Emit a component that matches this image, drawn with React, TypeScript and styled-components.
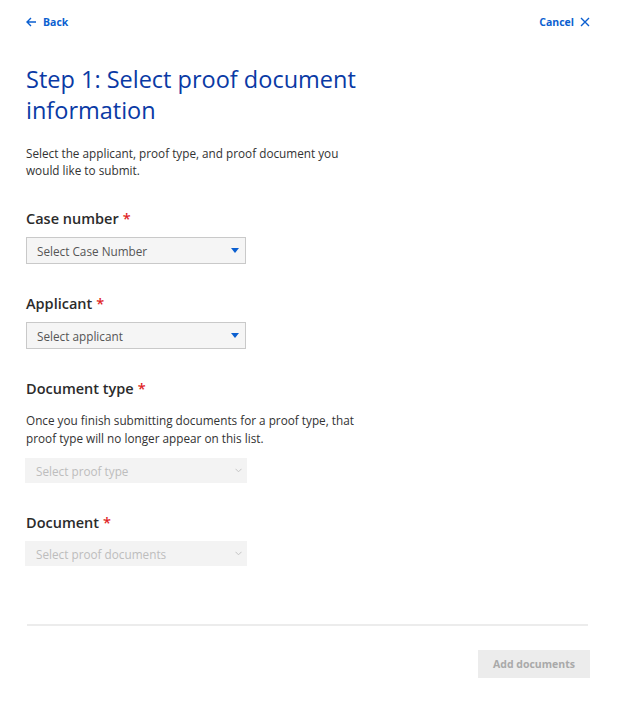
import React from 'react'
import styled, { createGlobalStyle } from 'styled-components'

const GlobalStyle = createGlobalStyle`
  body {
    margin: 0;
    background: #ffffff;
    font-family: 'Open Sans', 'Noto Sans', sans-serif;
    color: #333333;
  }
`

const Page = styled.div`
  padding: 13px 34px 24px 26px;
`

const TopBar = styled.div`
  display: flex;
  justify-content: space-between;
  align-items: center;
  height: 18px;
`

const NavLink = styled.a`
  display: flex;
  align-items: center;
  gap: 6px;
  font-size: 10.5px;
  font-weight: 700;
  color: #0b5fd0;
  text-decoration: none;
  cursor: pointer;
`

const Title = styled.h1`
  margin: 33px 0 0;
  max-width: 350px;
  font-size: 23.5px;
  font-weight: 400;
  line-height: 31px;
  color: #0a3aa5;
`

const Intro = styled.p`
  margin: 19px 0 0;
  max-width: 340px;
  font-size: 11.75px;
  line-height: 17px;
  color: #333333;
`

const Field = styled.div<{ $gap: number }>`
  margin-top: ${(p) => p.$gap}px;
`

const Label = styled.div`
  font-size: 14.5px;
  font-weight: 600;
  color: #2b2b2b;
  line-height: 22px;
`

const Required = styled.span`
  color: #e01f26;
  margin-left: 4px;
`

const Help = styled.p`
  margin: 11px 0 0;
  max-width: 340px;
  font-size: 11.75px;
  line-height: 18px;
  color: #333333;
`

const SelectBox = styled.div<{ $disabled?: boolean; $top: number }>`
  display: flex;
  align-items: center;
  justify-content: space-between;
  box-sizing: border-box;
  margin-top: ${(p) => p.$top}px;
  margin-left: ${(p) => (p.$disabled ? '-1px' : '0')};
  width: ${(p) => (p.$disabled ? '222px' : '220px')};
  height: ${(p) => (p.$disabled ? '25px' : '27px')};
  padding: 0 ${(p) => (p.$disabled ? '5px' : '6px')} 0 ${(p) => (p.$disabled ? '11px' : '10px')};
  background: ${(p) => (p.$disabled ? '#f3f3f3' : '#f5f5f5')};
  border: ${(p) => (p.$disabled ? 'none' : '1px solid #c9c9c9')};
  font-size: 11.75px;
  color: ${(p) => (p.$disabled ? '#bdbdbd' : '#555555')};
`

const Divider = styled.hr`
  margin: 58px 2px 0 1px;
  border: none;
  border-top: 2px solid #ececec;
`

const Footer = styled.div`
  display: flex;
  justify-content: flex-end;
  margin-top: 24px;
`

const PrimaryButton = styled.button`
  width: 112px;
  height: 28px;
  border: none;
  background: #ececec;
  color: #a9a9a9;
  font-family: 'Open Sans', 'Noto Sans', sans-serif;
  font-size: 10.5px;
  font-weight: 700;
`

const Caret = () => (
  <svg width="8" height="5" viewBox="0 0 8 5">
    <path d="M0 0 H8 L4 5 Z" fill="#0b5fd0" />
  </svg>
)

const Chevron = () => (
  <svg width="7" height="5" viewBox="0 0 7 5">
    <path d="M0.5 0.8 L3.5 3.8 L6.5 0.8" fill="none" stroke="#c4c4c4" strokeWidth="1" />
  </svg>
)

const fields = [
  { label: 'Case number', placeholder: 'Select Case Number', gap: 29 },
  { label: 'Applicant', placeholder: 'Select applicant', gap: 29 },
]

export default function App() {
  return (
    <>
      <GlobalStyle />
      <Page>
        <TopBar>
          <NavLink>
            <svg width="11" height="10" viewBox="0 0 11 10">
              <path d="M10 5 H1.5 M5 1 L1 5 L5 9" fill="none" stroke="#0b5fd0" strokeWidth="1.4" />
            </svg>
            Back
          </NavLink>
          <NavLink>
            Cancel
            <svg width="10" height="10" viewBox="0 0 10 10">
              <path d="M1 1 L9 9 M9 1 L1 9" fill="none" stroke="#0b5fd0" strokeWidth="1.4" />
            </svg>
          </NavLink>
        </TopBar>

        <Title>Step 1: Select proof document information</Title>
        <Intro>Select the applicant, proof type, and proof document you would like to submit.</Intro>

        {fields.map((f) => (
          <Field key={f.label} $gap={f.gap}>
            <Label>
              {f.label}
              <Required>*</Required>
            </Label>
            <SelectBox $top={7}>
              {f.placeholder}
              <Caret />
            </SelectBox>
          </Field>
        ))}

        <Field $gap={29}>
          <Label>
            Document type
            <Required>*</Required>
          </Label>
          <Help>
            Once you finish submitting documents for a proof type, that proof type will no longer appear on this list.
          </Help>
          <SelectBox $disabled $top={11}>
            Select proof type
            <Chevron />
          </SelectBox>
        </Field>

        <Field $gap={29}>
          <Label>
            Document
            <Required>*</Required>
          </Label>
          <SelectBox $disabled $top={7}>
            Select proof documents
            <Chevron />
          </SelectBox>
        </Field>

        <Divider />
        <Footer>
          <PrimaryButton disabled>Add documents</PrimaryButton>
        </Footer>
      </Page>
    </>
  )
}
